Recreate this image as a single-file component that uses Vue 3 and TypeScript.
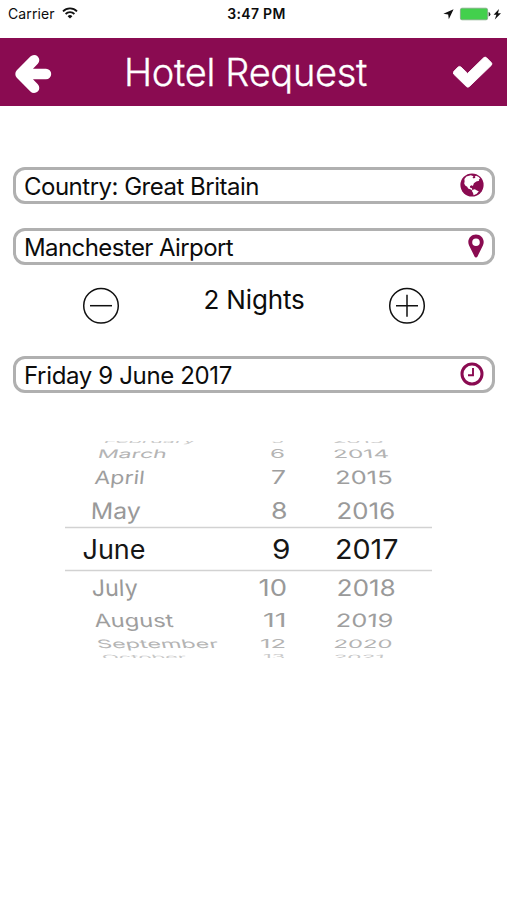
<script setup lang="ts">
interface Cell {
  text: string
  x: number
  width: number
}
interface WheelRow {
  baseline: number
  flatten: number
  lean: number
  shade: string
  cells: Cell[]
}

const cell = (text: string, x: number, width: number): Cell => ({ text, x, width })

const rows: WheelRow[] = [
  { baseline: 13, flatten: 0.22, lean: 26, shade: '#c8c8c8', cells: [cell('February', 38, 92), cell('5', 206, 13), cell('2013', 268, 51)] },
  { baseline: 28, flatten: 0.44, lean: 14, shade: '#b4b4b4', cells: [cell('March', 32, 69), cell('6', 205, 15), cell('2014', 268.5, 56)] },
  { baseline: 54, flatten: 0.69, lean: 6, shade: '#9e9e9e', cells: [cell('April', 29, 50), cell('7', 206, 15), cell('2015', 270.5, 57.5)] },
  { baseline: 88.5, flatten: 0.86, lean: 2, shade: '#999999', cells: [cell('May', 25.5, 50), cell('8', 206, 16.5), cell('2016', 271.5, 59)] },
  { baseline: 128.5, flatten: 1, lean: 0, shade: '#161616', cells: [cell('June', 17.5, 63), cell('9', 207, 18.5), cell('2017', 270, 63.5)] },
  { baseline: 165.5, flatten: 0.86, lean: -2, shade: '#999999', cells: [cell('July', 27, 46), cell('10', 193.5, 28.5), cell('2018', 271.5, 59)] },
  { baseline: 197, flatten: 0.69, lean: -6, shade: '#9e9e9e', cells: [cell('August', 30, 79), cell('11', 198, 23.5), cell('2019', 270.5, 57.5)] },
  { baseline: 217.5, flatten: 0.44, lean: -14, shade: '#b4b4b4', cells: [cell('September', 33, 121), cell('12', 195, 26), cell('2020', 268, 59)] },
  { baseline: 229, flatten: 0.22, lean: -26, shade: '#c8c8c8', cells: [cell('October', 38, 84), cell('13', 198, 22), cell('2021', 268, 51)] },
]

// The drum's perspective: text leans more the farther its column is from the centre.
const leanFactor = (x: number): number => (x < 150 ? -1 : x < 230 ? 0 : 0.5)

const place = (row: WheelRow, c: Cell): string =>
  `translate(${c.x} ${row.baseline}) skewX(${row.lean * leanFactor(c.x)}) scale(1 ${row.flatten})`
</script>

<template>
  <main class="screen">
    <div class="status">
      <div class="carrier">
        <span>Carrier</span>
        <svg width="16" height="12" viewBox="0 0 16 12" fill="none" stroke="#111" stroke-width="1.8">
          <path d="M1 4.3a10 10 0 0 1 14 0" />
          <path d="M3.6 7a6.3 6.3 0 0 1 8.8 0" />
          <path d="M5.6 9.2a3.5 3.5 0 0 1 4.8 0L8 11.6z" fill="#111" stroke="none" />
        </svg>
      </div>
      <span class="time">3:47 PM</span>
      <div class="power">
        <svg width="60" height="14" viewBox="0 0 60 14">
          <path d="M10.6 2.2L.4 6.8l4.8.6.6 4.8z" fill="#111" />
          <rect x="17.4" y="1.2" width="27.2" height="11.6" rx="1.6" fill="#43d04d" stroke="#7fa883" stroke-width=".8" />
          <path d="M45.6 5q1.8.4 1.8 2.2t-1.8 2.2z" fill="#333" />
          <path d="M56 2l-5.4 5.8h2.8L51.8 12.6l6.2-6.4h-3z" fill="#111" />
        </svg>
      </div>
    </div>

    <header class="bar">
      <svg class="back" width="38" height="40" viewBox="0 0 38 40">
        <path d="M20.1 6.1L6.5 20l13.6 13.9M8 20h24" fill="none" stroke="#fff" stroke-width="10.4" stroke-linejoin="round" stroke-linecap="round" />
      </svg>
      <h1>Hotel Request</h1>
      <svg class="done" width="40" height="32" viewBox="0 0 40 32">
        <path d="M.8 15.4L5 11.1q1.5-1.4 3 0l6.6 6.3L30.6 1.8q1.5-1.4 3 0l4.6 4.6q1.5 1.5 0 3L16.4 30.5q-1.5 1.4-3 0L.8 18.2q-1.3-1.4 0-2.8z" fill="#fff" stroke="#fff" stroke-width=".9" stroke-linejoin="round" />
      </svg>
    </header>

    <div class="field country">
      <span>Country: Great Britain</span>
      <svg width="24" height="24" viewBox="0 0 24 24">
        <circle cx="12" cy="12" r="11.6" fill="#8a0b51" />
        <path d="M10.8 2.2L6.4 3.4 4.4 6l.2 2.4-.4 2 1 2.1 2 1.2.9 1.8 2.8 1 1.5 1.2-.5-2.4-2-.7.2-1.6 1.7-.7 1.1.8 1-2.9 2.4-1.6 2.8-.8-.2-1.2 1.2-.8-1.4-1.7-2.5-1.4-1.4.7.6 1.4-1.7.6-1.2-1 1-1.2z" fill="#fff" />
        <path d="M12.2 17l2.6-.7 2.6 1.5 1.4.5-2 2.5-3.2 1.4-.6-2.4-.9-1.3z" fill="#fff" />
      </svg>
    </div>

    <div class="field airport">
      <span>Manchester Airport</span>
      <svg width="16" height="24" viewBox="0 0 16 24">
        <path d="M8 .4C3.6.4.3 3.8.3 8c0 1.4.3 2.4.8 3.4l5.4 11q.5 1 1.5 1t1.5-1l5.4-11c.5-1 .8-2 .8-3.4C15.7 3.8 12.4.4 8 .4zm0 4a3.8 3.8 0 1 1 0 7.6 3.8 3.8 0 0 1 0-7.6z" fill="#8a0b51" fill-rule="evenodd" />
      </svg>
    </div>

    <div class="nights">
      <svg width="38" height="38" viewBox="0 0 38 38" fill="none" stroke="#111" stroke-width="1.5">
        <circle cx="19" cy="18.7" r="17.3" />
        <path d="M8 18.7h22" />
      </svg>
      <span>2 Nights</span>
      <svg width="38" height="38" viewBox="0 0 38 38" fill="none" stroke="#111" stroke-width="1.5">
        <circle cx="19" cy="18.7" r="17.3" />
        <path d="M8 18.7h22M19 7.7v22" />
      </svg>
    </div>

    <div class="field date">
      <span>Friday 9 June 2017</span>
      <svg width="24" height="24" viewBox="0 0 24 24" fill="none" stroke="#8a0b51">
        <circle cx="12" cy="12" r="10" stroke-width="3" />
        <path d="M13 6v7.2H8" stroke-width="1.9" />
      </svg>
    </div>

    <svg class="wheel" width="368" height="217" viewBox="0 11 368 217">
      <g v-for="row in rows" :key="row.baseline" :fill="row.shade">
        <text
          v-for="c in row.cells"
          :key="c.text"
          :transform="place(row, c)"
          :textLength="c.width"
          lengthAdjust="spacingAndGlyphs"
        >{{ c.text }}</text>
      </g>
      <path d="M0 97.5h367M0 140.5h367" stroke="#d2d2d2" stroke-width="1.4" />
    </svg>
  </main>
</template>

<style>
body {
  margin: 0;
  background: #fff;
}
</style>

<style scoped>
.screen {
  width: 507px;
  height: 900px;
  overflow: hidden;
  background: #fff;
  color: #0c0c0c;
  font-family: Inter, "Liberation Sans", sans-serif;
}
svg {
  display: block;
  flex: none;
}
.status {
  display: grid;
  grid-template-columns: 1fr auto 1fr;
  align-items: center;
  height: 38px;
  padding: 0 4px 11px 8px;
  box-sizing: border-box;
  font-size: 14px;
}
.carrier {
  display: flex;
  align-items: center;
  gap: 7px;
  letter-spacing: 0.1px;
}
.carrier svg {
  margin-top: -2px;
}
.time {
  padding-left: 2px;
  font-weight: 600;
  letter-spacing: 0.3px;
}
.power {
  display: flex;
  justify-content: flex-end;
}
.bar {
  display: flex;
  align-items: center;
  justify-content: space-between;
  height: 68px;
  padding: 0 14px;
  background: #8a0b51;
  color: #fff;
}
.back {
  margin-top: 3px;
}
h1 {
  margin: -1px 14px 0 0;
  font-size: 38px;
  font-weight: 300;
  line-height: 1;
  letter-spacing: -0.3px;
  white-space: nowrap;
  -webkit-text-stroke: 0.3px #fff;
}
.field {
  display: flex;
  align-items: center;
  justify-content: space-between;
  height: 37px;
  margin: 0 12px 0 13px;
  padding: 0 8px;
  box-sizing: border-box;
  border: 3.5px solid #b0b0b0;
  border-radius: 12px;
  font-size: 24px;
  line-height: 1;
  letter-spacing: -0.5px;
  white-space: nowrap;
}
.field span {
  padding-top: 2px;
}
.field svg {
  margin-top: -2px;
}
.country {
  margin-top: 61px;
}
.airport {
  margin-top: 24px;
  letter-spacing: -0.58px;
}
.nights {
  display: flex;
  justify-content: space-between;
  margin-top: 22px;
  padding: 0 82px;
  font-size: 26px;
  line-height: 26px;
  letter-spacing: -0.15px;
}
.nights svg:last-child {
  margin-right: -1px;
}
.date {
  margin-top: 31px;
  letter-spacing: -0.35px;
}
.wheel {
  margin: 48px 0 0 65px;
  font-size: 26.5px;
}
</style>
